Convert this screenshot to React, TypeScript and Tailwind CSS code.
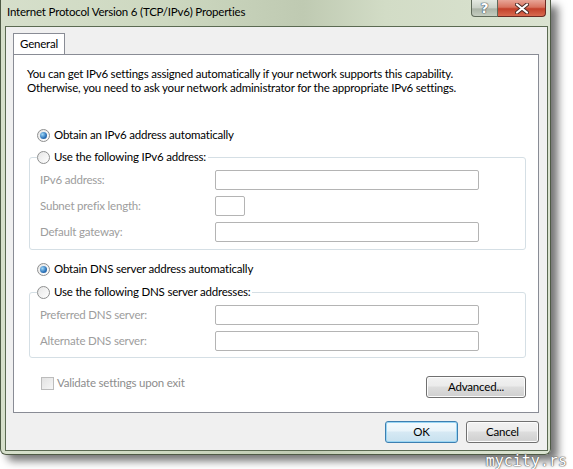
const Radio = ({ checked = false }: { checked?: boolean }) => (
  <span className="relative inline-flex h-[13px] w-[13px] shrink-0 items-center justify-center rounded-full border border-[#8e8f8f] bg-gradient-to-br from-[#e6e6e6] to-[#ffffff]">
    {checked && (
      <span className="h-[7px] w-[7px] rounded-full bg-[radial-gradient(circle_at_35%_35%,#9fd8f8,#2a71b8_60%,#1c4f8c)]" />
    )}
  </span>
);

const RadioRow = ({ label, checked = false }: { label: string; checked?: boolean }) => (
  <div className="flex h-[14px] items-center gap-[4px] text-black">
    <Radio checked={checked} />
    <span className="leading-[14px]">{label}</span>
  </div>
);

const Field = ({ label, width = "w-[264px]" }: { label: string; width?: string }) => (
  <div className="flex h-[20px] items-center">
    <span className="w-[175px] text-[#9d9d9d]">{label}</span>
    <div className={`h-[20px] ${width} rounded-[2px] border border-[#b4b4b4] bg-white`} />
  </div>
);

const WinButton = ({ label, def = false, w = "w-[73px]" }: { label: string; def?: boolean; w?: string }) => (
  <div
    className={`flex h-[22px] ${w} items-center justify-center rounded-[3px] border ${
      def
        ? "border-[#3c7fb1] shadow-[inset_0_0_0_1px_#9ad6f4] bg-[linear-gradient(#f4fafd_0%,#e9f4fa_45%,#d6e9f4_50%,#c8e1ef_100%)]"
        : "border-[#707070] shadow-[inset_0_0_0_1px_#fcfcfc] bg-[linear-gradient(#f2f2f2_0%,#ebebeb_45%,#dddddd_50%,#cfcfcf_100%)]"
    } text-black`}
  >
    {label}
  </div>
);

export default function App() {
  return (
    <div className="relative h-[469px] w-[573px] overflow-hidden bg-white font-['Lato',sans-serif] text-[11.5px] tracking-[-0.2px]">
      <div className="flex h-[455px] w-[551px] flex-col rounded-b-[6px] border-l border-r border-b border-[#4e5a45] bg-[linear-gradient(90deg,#d6dfcb_0%,#cdd8c0_30%,#bfcab2_55%,#d2dcc6_70%,#dbe3d1_100%)] pb-[3px] pl-[4px] pr-[2px] shadow-[7px_6px_9px_rgba(0,0,0,0.55)]">
        {/* title bar */}
        <div className="flex h-[26px] shrink-0 items-start justify-between">
          <div className="pl-[2px] pt-[4px] leading-[16px] text-black">
            Internet Protocol Version 6 (TCP/IPv6) Properties
          </div>
          <div className="mr-[2px] flex h-[17px]">
            <div className="flex w-[27px] items-center justify-center rounded-bl-[4px] border border-t-0 border-[#5f6a5a] bg-[linear-gradient(#e4e9e1_0%,#c9d0c6_50%,#aab3a6_55%,#c5cdc0_100%)] font-['DejaVu_Sans',sans-serif] text-[14px] font-bold leading-none text-white [text-shadow:0_0_1px_#3b4a5a,0_0_1px_#3b4a5a,0_0_1px_#3b4a5a]">
              ?
            </div>
            <div className="flex w-[48px] items-center justify-center rounded-br-[4px] border border-l-0 border-t-0 border-[#6b2a22] bg-[linear-gradient(#e8a597_0%,#d8735f_45%,#c2402a_55%,#d86a4f_100%)]">
              <svg width="14" height="11" viewBox="0 0 14 11">
                <path d="M2 1.5 L12 9.5 M12 1.5 L2 9.5" stroke="#4a2a25" strokeWidth="4" strokeLinecap="round" />
                <path d="M2 1.5 L12 9.5 M12 1.5 L2 9.5" stroke="#ffffff" strokeWidth="2.2" strokeLinecap="round" />
              </svg>
            </div>
          </div>
        </div>

        {/* client area */}
        <div className="flex flex-1 flex-col border border-[#5b6a52] bg-[#f0f0f0]">
          <div className="ml-[7px] mr-[8px] mt-[6px] flex flex-col">
            <div className="flex">
              <div className="-mb-px h-[22px] w-[52px] border border-b-0 border-[#898c95] bg-white pl-[6px] pt-[3px] leading-[14px] text-black">
                General
              </div>
            </div>
            <div className="flex h-[359px] flex-col border border-[#898c95] bg-white pl-[13px] pr-[12px] pt-[12px]">
              <p className="whitespace-nowrap leading-[14px] text-black">
                You can get IPv6 settings assigned automatically if your network supports this capability.
                <br />
                Otherwise, you need to ask your network administrator for the appropriate IPv6 settings.
              </p>

              <div className="ml-[10px] mt-[33px]">
                <RadioRow label="Obtain an IPv6 address automatically" checked />
              </div>

              <fieldset className="ml-[2px] mt-[8px] rounded-[3px] border border-[#d5dfe5] px-[10px] pb-[7px] pt-[6px]">
                <legend className="-ml-[3px] pr-[2px]">
                  <RadioRow label="Use the following IPv6 address:" />
                </legend>
                <div className="flex flex-col gap-[6px]">
                  <Field label="IPv6 address:" />
                  <Field label="Subnet prefix length:" width="w-[30px]" />
                  <Field label="Default gateway:" />
                </div>
              </fieldset>

              <div className="ml-[10px] mt-[12px]">
                <RadioRow label="Obtain DNS server address automatically" checked />
              </div>

              <fieldset className="ml-[2px] mt-[9px] rounded-[3px] border border-[#d5dfe5] px-[10px] pb-[6px] pt-[6px]">
                <legend className="-ml-[3px] pr-[2px]">
                  <RadioRow label="Use the following DNS server addresses:" />
                </legend>
                <div className="flex flex-col gap-[6px]">
                  <Field label="Preferred DNS server:" />
                  <Field label="Alternate DNS server:" />
                </div>
              </fieldset>

              <div className="mt-[18px] flex items-start justify-between">
                <div className="ml-[14px] flex h-[14px] items-center gap-[3px]">
                  <span className="h-[13px] w-[13px] border border-[#bcbcbc] bg-gradient-to-br from-[#e2e2e2] to-[#f6f6f6]" />
                  <span className="leading-[14px] text-[#8d8d8d]">Validate settings upon exit</span>
                </div>
                <WinButton label="Advanced..." w="w-[100px]" />
              </div>
            </div>
          </div>

          <div className="mr-[8px] mt-[8px] flex justify-end gap-[8px]">
            <WinButton label="OK" def />
            <WinButton label="Cancel" />
          </div>
        </div>
      </div>

      <div className="absolute bottom-[0px] right-[6px] font-['DejaVu_Sans_Mono',monospace] text-[15px] leading-[16px] tracking-[0px] text-white [text-shadow:0_0_1px_#555,0_0_1px_#555,0_0_2px_#777]">
        mycity.rs
      </div>
    </div>
  );
}
